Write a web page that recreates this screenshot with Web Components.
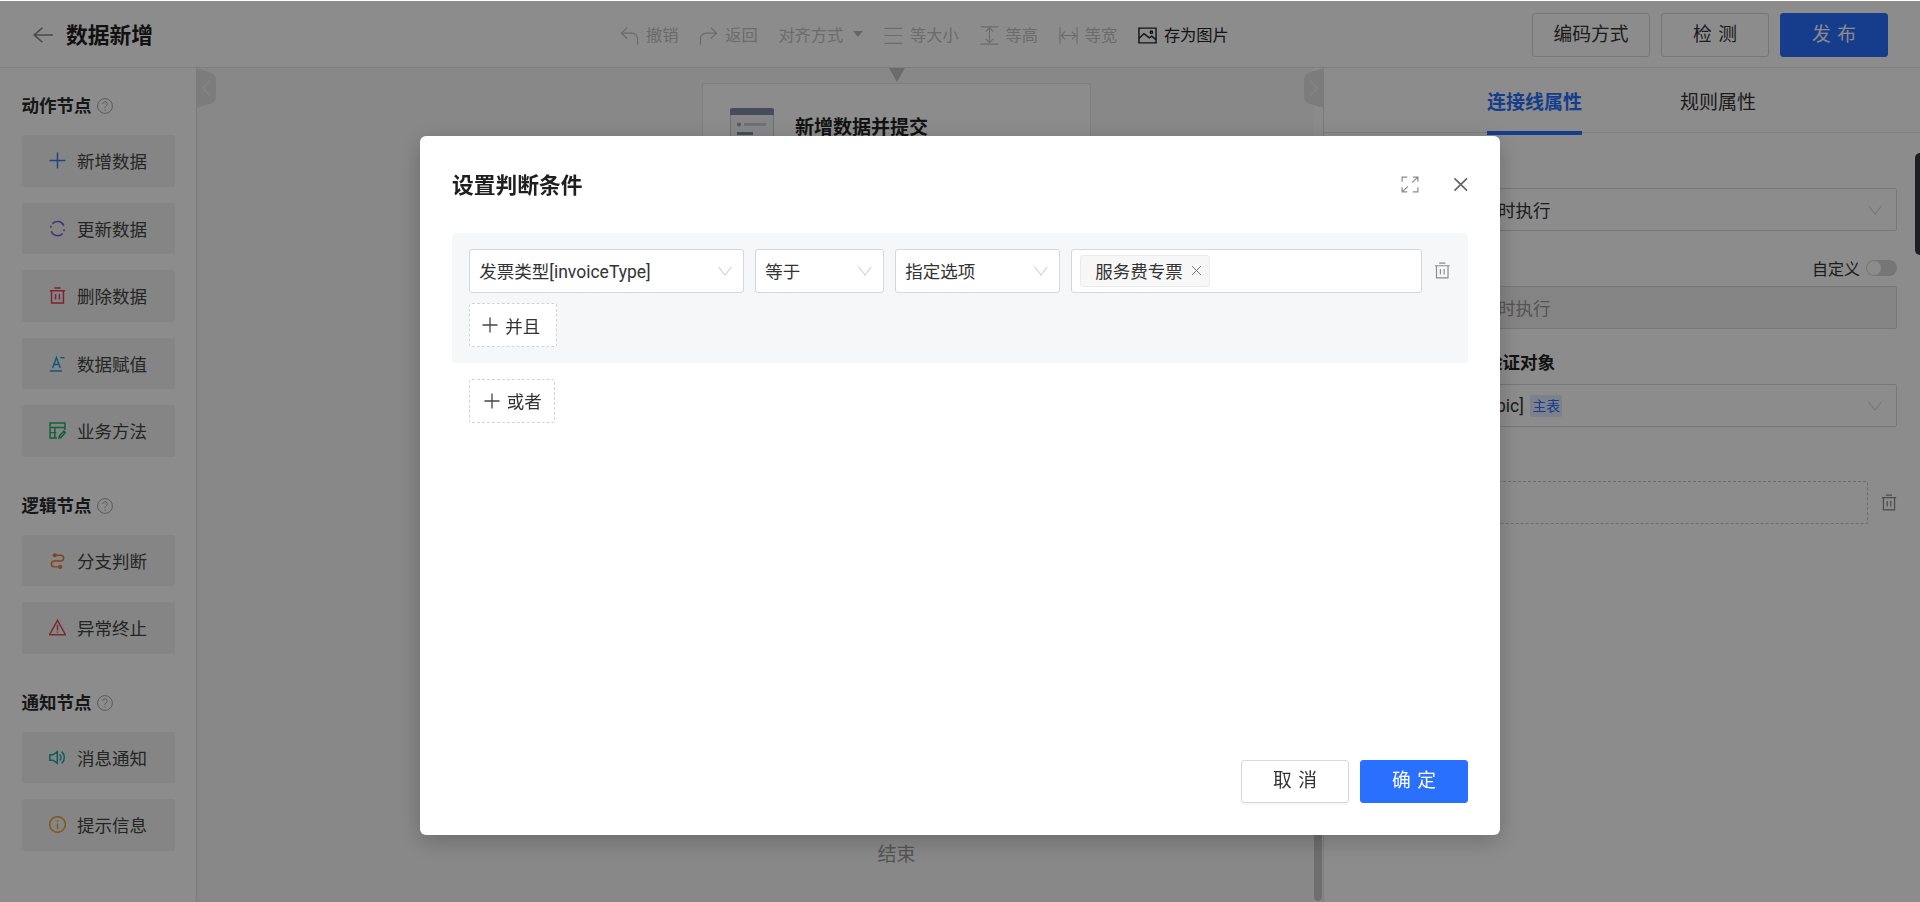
<!DOCTYPE html>
<html lang="zh-CN">
<head>
<meta charset="utf-8">
<title>数据新增</title>
<style>
html,body{margin:0;height:100%;overflow:hidden;background:#fff}
body{font-family:Roboto,"Noto Sans CJK SC","Noto Sans",sans-serif;font-size:17.5px;color:#333}
</style>
</head>
<body>
<x-app>
  <x-header slot="header"></x-header>
  <x-sidebar slot="sidebar"></x-sidebar>
  <x-canvas slot="canvas"></x-canvas>
  <x-panel slot="panel"></x-panel>
</x-app>
<x-dialog title-text="设置判断条件"></x-dialog>

<script>
const ICONS={
 plus:'<path d="M8 .5V15.5M.5 8H15.5"/>',
 refresh:'<path d="M14 5.4A6.6 6.6 0 0 0 3.2 3.4M13 12.6A6.6 6.6 0 0 1 2 10.6"/><path d="M1.8 7.4V5.4M14.2 8.6v2"/>',
 trash:'<path d="M.8 3.5H15.2M5 1H11M2.4 3.5V15H13.6V3.5M6.2 6.5V11.8M9.8 6.5V11.8"/>',
 assign:'<path d="M3.4 12.2L7 2.4L10.6 12.2M4.6 9H9.4M.8 15H12.2M10.8 2.8c1.2-1.4 2 .8 3.7-.5"/>',
 tablepen:'<path d="M7.5 15H1V1H15V7.5M1 5.2H15M1 10H7M5.5 5.2V15M9.5 15.2L10 12.8L14 8.6L15.4 10L11.4 14.4Z"/>',
 branch:'<path d="M3.5 3H11.5A2.8 2.8 0 0 1 11.5 8.5H4.5A2.8 2.8 0 0 0 4.5 14H12.5"/><circle cx="5.5" cy="3" r="1.2"/><circle cx="10.5" cy="14" r="1.2"/>',
 warn:'<path d="M8 1.2L15.5 14.8H.5ZM8 5.5V10.5M8 11.8V13"/>',
 speaker:'<path d="M.8 5.5H3.8L7.8 2.5V13.5L3.8 10.5H.8ZM10 5.2a4 4 0 0 1 0 5.6M12 2.5a7.5 7.5 0 0 1 0 11"/>',
 info:'<circle cx="8" cy="8" r="7.4"/><path d="M8 7V12.2M8 4V5.4"/>',
 help:'<circle cx="8" cy="8" r="7.4"/><path d="M5.8 6a2.2 2.2 0 1 1 3.4 1.9C8.3 8.5 8 9 8 10M8 11.3V12.6"/>',
 chev:'<path d="M.6 3.2L8 12.8L15.4 3.2"/>',
 close:'<path d="M1.5 1.5L14.5 14.5M14.5 1.5L1.5 14.5"/>',
 expand:'<path d="M1 5.5V1H5.5M15 1L10 6M10.5 1H15V5.5M1 15L6 10M1 10.5V15H5.5M15 10.5V15H10.5"/>',
 undo:'<path d="M6 1.5L1.2 6L6 10.5M1.2 6H10c3 0 4.8 2.4 4.8 5V15.5"/>',
 redo:'<path d="M10 1.5L14.8 6L10 10.5M14.8 6H6c-3 0-4.8 2.4-4.8 5V15.5"/>',
 samesize:'<path d="M.5 2H15.5M.5 8H15.5M.5 14.6H15.5"/>',
 sameheight:'<path d="M.5 .8H15.5M.5 15.2H15.5M8 1.5V14M4.8 4.8L8 1.5L11.2 4.8M4.8 10.8L8 14L11.2 10.8"/>',
 samewidth:'<path d="M.8 1V15M15.2 1V15M2 8H14M5 4.8L2 8L5 11.2M11 4.8L14 8L11 11.2"/>',
 image:'<path d="M.8 1.8H15.2V14.2H.8ZM.8 10.5L5 6.5L9.5 10L11.5 8.5L15.2 11.5"/><circle cx="11.3" cy="5.2" r="1"/>',
 back:'<path d="M16 8H1M7.5 1.5L1 8L7.5 14.5"/>'
};
const define=(name,render)=>customElements.define(name,class extends HTMLElement{
  connectedCallback(){ if(this.shadowRoot) return; this.attachShadow({mode:'open'}).innerHTML=render(this); }
});

define('x-icon',el=>{
  const w=el.getAttribute('w')||16,h=el.getAttribute('h')||w,c=el.getAttribute('color')||'currentColor',s=el.getAttribute('sw')||1.1;
  return `<style>:host{display:inline-flex;flex:none;width:${w}px;height:${h}px;color:${c}}svg{display:block;width:100%;height:100%}</style>
  <svg viewBox="0 0 16 16" preserveAspectRatio="none" fill="none" stroke="currentColor" stroke-width="${s}">${ICONS[el.getAttribute('name')]}</svg>`;
});

define('x-tool',el=>{
  const off=el.hasAttribute('off');
  return `<style>:host{display:inline-flex;align-items:center;gap:7px;font-size:16.25px;line-height:24px;padding-top:1px;color:${off?'#c4c4c4':'#222'};white-space:nowrap}
  .t{width:0;height:0;border-left:5px solid transparent;border-right:5px solid transparent;border-top:6px solid #bbb;margin:0 0 3px 3px}</style>
  ${el.getAttribute('icon')?`<x-icon name="${el.getAttribute('icon')}" w="19" h="19" sw="${off?1:1.2}"></x-icon>`:''}<slot></slot>${el.hasAttribute('drop')?'<i class="t"></i>':''}`;
});

define('x-btn',el=>{
  const p=el.hasAttribute('primary');
  return `<style>:host{display:inline-flex;align-items:center;justify-content:center;box-sizing:border-box;height:${el.getAttribute('h')||43.75}px;width:${el.getAttribute('w')||108}px;border-radius:3px;
  font-size:18.75px;line-height:1;white-space:nowrap;border:1px solid ${p?'#2970ff':'#d9d9d9'};background:${p?'#2970ff':'#fff'};color:${p?'#fff':'#333'};${el.hasAttribute('shadow')?'box-shadow:0 2px 2px rgba(0,0,0,.04);':''}}
  span{letter-spacing:${el.hasAttribute('spaced')?'.34em':'0'};margin-right:${el.hasAttribute('spaced')?'-.34em':'0'}}</style><span><slot></slot></span>`;
});

define('x-header',()=>`<style>
 :host{display:flex;align-items:center;box-sizing:border-box;height:68px;border-top:1px solid #fff;border-bottom:1px solid #e6e6e6;padding-top:2px;background:#fff}
 .left{display:flex;align-items:center;width:620px;box-sizing:border-box;padding-left:33px;gap:13px;flex:none}
 h1{margin:2px 0 0;font-size:21.75px;font-weight:700;line-height:30px;color:#1f1f1f}
 .tools{display:flex;align-items:center;gap:20.7px}
 .right{margin-left:auto;display:flex;gap:11px;padding-right:32px}
</style>
<div class="left"><x-icon name="back" w="20" h="18" color="#888" sw="1.4"></x-icon><h1>数据新增</h1></div>
<div class="tools">
 <x-tool off icon="undo">撤销</x-tool><x-tool off icon="redo">返回</x-tool><x-tool off drop>对齐方式</x-tool>
 <x-tool off icon="samesize">等大小</x-tool><x-tool off icon="sameheight">等高</x-tool><x-tool off icon="samewidth">等宽</x-tool>
 <x-tool icon="image">存为图片</x-tool>
</div>
<div class="right"><x-btn w="118">编码方式</x-btn><x-btn spaced>检测</x-btn><x-btn spaced primary>发布</x-btn></div>`);

define('x-node-btn',el=>`<style>
 :host{display:flex;align-items:center;box-sizing:border-box;width:153px;height:51.25px;padding-left:27px;gap:11.5px;background:#f2f2f2;border-radius:2px;font-size:17.5px;color:#444}
</style><x-icon name="${el.getAttribute('icon')}" w="17" h="17" color="${el.getAttribute('color')}" sw="1.4"></x-icon><slot></slot>`);

define('x-node-group',el=>`<style>
 :host{display:flex;flex-direction:column;gap:16.25px;margin-bottom:37px}
 .t{display:flex;align-items:center;gap:5px;height:24px;margin-bottom:1px;font-size:17.5px;font-weight:700;color:#2a2a2a;line-height:24px}
</style><div class="t">${el.getAttribute('label')}<x-icon name="help" w="16" h="16" color="#999" sw=".9"></x-icon></div><slot></slot>`);

define('x-sidebar',()=>`<style>
 :host{display:block;box-sizing:border-box;width:197px;height:100%;padding:26px 0 0 21.5px;background:#fff;border-right:1px solid #e0e0e0}
</style>
<x-node-group label="动作节点">
 <x-node-btn icon="plus" color="#3d78ea">新增数据</x-node-btn>
 <x-node-btn icon="refresh" color="#7a5cd8">更新数据</x-node-btn>
 <x-node-btn icon="trash" color="#e2434f">删除数据</x-node-btn>
 <x-node-btn icon="assign" color="#1f9ed8">数据赋值</x-node-btn>
 <x-node-btn icon="tablepen" color="#1fb26b">业务方法</x-node-btn>
</x-node-group>
<x-node-group label="逻辑节点">
 <x-node-btn icon="branch" color="#ea7a30">分支判断</x-node-btn>
 <x-node-btn icon="warn" color="#e44b57">异常终止</x-node-btn>
</x-node-group>
<x-node-group label="通知节点">
 <x-node-btn icon="speaker" color="#16a7a7">消息通知</x-node-btn>
 <x-node-btn icon="info" color="#e9a23a">提示信息</x-node-btn>
</x-node-group>`);

define('x-flow-node',()=>`<style>
 :host{position:absolute;left:505px;top:15px;box-sizing:border-box;width:389px;height:104px;background:#fff;border:1px solid #e6e6e6;border-radius:2px;display:flex;align-items:flex-start;padding:24px 0 0 27px;gap:21px}
 b{font-size:19px;font-weight:700;line-height:26px;color:#222;margin-top:7px}
 svg{display:block;flex:none}
</style>
<svg width="44" height="44" viewBox="0 0 44 44"><rect x="0.5" y="0.5" width="43" height="43" rx="2" fill="#f4f5f7" stroke="#c9ccd4"/><path d="M0 2a2 2 0 0 1 2-2H42a2 2 0 0 1 2 2V7H0Z" fill="#838ba0"/><circle cx="9" cy="16.5" r="2" fill="#9aa1b1"/><rect x="14" y="15" width="22" height="3" fill="#c9ccd4"/><rect x="7" y="24" width="16" height="3" fill="#838ba0"/><rect x="32" y="30" width="3" height="10" fill="#1cc576"/></svg>
<b>新增数据并提交</b>`);

define('x-canvas',()=>`<style>
 :host{display:block;position:relative;height:100%;background:#f7f7f7;overflow:hidden}
 .tab{position:absolute;top:0;width:19px;height:40px;display:block}
 .l{left:0}.r{right:0}
 .arrow{position:absolute;left:692px;top:0;width:0;height:0;border-left:8px solid transparent;border-right:8px solid transparent;border-top:14px solid #c4c4c4}
 .track{position:absolute;right:0;top:0;bottom:0;width:9px;background:#fdfdfd}
 .thumb{position:absolute;right:1px;top:300px;bottom:1px;width:8px;border-radius:4px;background:#c8c8c8}
 .end{position:absolute;left:667.5px;top:774px;width:64px;text-align:center;font-size:19px;line-height:26px;color:#999}
 .ring{position:absolute;left:676px;top:721px;width:46px;height:46px;border:1px solid #888;border-radius:50%;box-sizing:border-box}
</style>
<div class="track"><div class="thumb"></div></div>
<svg class="tab l" viewBox="0 0 19 40"><path d="M0 0L12 4Q19 6 19 12V29Q19 35 12 36L0 40Z" fill="#e2e2e2"/><path d="M12 13L6 20L12 27" fill="none" stroke="#f2f2f2" stroke-width="1.2"/></svg>
<svg class="tab r" viewBox="0 0 19 40"><path d="M19 0L7 4Q0 6 0 12V29Q0 35 7 36L19 40Z" fill="#e2e2e2"/><path d="M7 13L13 20L7 27" fill="none" stroke="#f2f2f2" stroke-width="1.2"/></svg>
<div class="arrow"></div>
<x-flow-node></x-flow-node>
<div class="ring"></div>
<div class="end">结束</div>`);

define('x-field',el=>`<style>
 :host{display:flex;align-items:center;box-sizing:border-box;height:${el.getAttribute('h')||43}px;width:100%;border:1px solid #d9d9d9;border-radius:2px;background:${el.hasAttribute('disabled')?'#f1f1f1':'transparent'};color:${el.hasAttribute('disabled')?'#999':'#333'};font-size:17.5px;padding:0 14.5px 0 ${el.getAttribute('pl')||10}px;white-space:nowrap;gap:6px}
 .sp{flex:1}
</style><slot></slot><span class="sp"></span>${el.hasAttribute('chev')?'<x-icon name="chev" w="14" h="14" color="#c4c4c4" sw="1"></x-icon>':''}`);

define('x-panel',()=>`<style>
 :host{display:block;box-sizing:border-box;height:100%;border-left:1px solid #e0e0e0;background:#fff}
 .tabs{display:flex;gap:98px;height:65px;padding-left:163px;border-bottom:1px solid #e6e6e6;box-sizing:border-box}
 .tab{font-size:19px;line-height:24px;padding-top:23px;color:#333;box-sizing:border-box;height:67px;white-space:nowrap}
 .on{color:#2970ff;font-weight:700;border-bottom:4px solid #2970ff}
 .body{display:flex;flex-direction:column;padding:55px 23px 0 22px}
 .row{display:flex;align-items:center;justify-content:flex-end;gap:6px;height:24px;margin:25px 0 6px;font-size:16px;color:#333}
 .sw{position:relative;width:31px;height:16px;border-radius:8px;background:#d8d8d8}
 .sw::after{content:"";position:absolute;left:1px;top:1px;width:14px;height:14px;border-radius:50%;background:#fff}
 .lbl{margin:21.5px 0 9.5px;font-size:17.5px;font-weight:700;line-height:24px;color:#222;padding-left:139px;white-space:nowrap}
 .tag{font-size:13.75px;line-height:22px;height:22px;padding:0 2.5px;background:#e3ecff;color:#2970ff;border-radius:2px}
 .dash{display:flex;align-items:center;margin-top:54px;gap:13px}
 .box{flex:1;height:43px;box-sizing:border-box;border:1px dashed #c8c8c8;border-radius:2px}
</style>
<div class="tabs"><div class="tab on">连接线属性</div><div class="tab">规则属性</div></div>
<div class="body">
 <x-field chev pl="151">时执行</x-field>
 <div class="row">自定义<div class="sw"></div></div>
 <x-field disabled pl="151">时执行</x-field>
 <div class="lbl">验证对象</div>
 <x-field chev pl="149">pic]<span class="tag">主表</span></x-field>
 <div class="dash"><div class="box"></div><x-icon name="trash" w="16" h="17" color="#8a8a8a" sw="1.2"></x-icon></div>
</div>`);

define('x-select',el=>`<style>
 :host{display:flex;align-items:center;box-sizing:border-box;flex:none;height:43.75px;width:${el.getAttribute('w')}px;background:#fff;border:1px solid #d5d7dc;border-radius:3px;padding:0 ${el.hasAttribute('plain')?0:11}px 0 ${el.hasAttribute('plain')?8:9}px;font-size:17.5px;color:#333;white-space:nowrap}
 .s{flex:1}
</style><slot></slot><span class="s"></span>${el.hasAttribute('plain')?'':'<x-icon name="chev" w="14" h="14" color="#bdbdbd" sw="1"></x-icon>'}`);

define('x-tag',()=>`<style>
 :host{display:inline-flex;align-items:center;box-sizing:border-box;height:32.5px;width:130px;padding-left:14px;gap:8px;background:#f7f7f7;border:1px solid #ebebeb;border-radius:3px;font-size:17.5px;color:#333}
</style><slot></slot><x-icon name="close" w="11" h="11" color="#666" sw="1.3"></x-icon>`);

define('x-add',el=>`<style>
 :host{display:inline-flex;align-items:center;box-sizing:border-box;height:43.75px;width:${el.getAttribute('w')}px;padding-left:${el.getAttribute('pl')}px;gap:7px;border:1px dashed #d4d4d4;border-radius:3px;font-size:17.5px;color:#333;background:#fff;white-space:nowrap}
</style><x-icon name="plus" w="16" h="16" color="#444" sw="1.3"></x-icon><slot></slot>`);

define('x-condition',()=>`<style>
 :host{display:block;box-sizing:border-box;width:1015.5px;height:130px;padding:16px 0 0 17.3px;background:#f6f7f9;border-radius:3px}
 .row{display:flex;align-items:center;gap:11.5px}
 .add{margin-top:10.5px;display:flex}
 x-icon{margin-left:.5px}
</style>
<div class="row">
 <x-select w="274.5">发票类型[invoiceType]</x-select>
 <x-select w="128.5">等于</x-select>
 <x-select w="164.5">指定选项</x-select>
 <x-select plain w="350.5"><x-tag>服务费专票</x-tag></x-select>
 <x-icon name="trash" w="16.5" h="17" color="#8a8a8a" sw="1.1"></x-icon>
</div>
<div class="add"><x-add w="87.5" pl="12">并且</x-add></div>`);

define('x-dialog',el=>`<style>
 :host{position:fixed;left:0;right:0;top:1px;bottom:0;background:rgba(0,0,0,.45);display:flex;justify-content:center;align-items:flex-start}
 .m{box-sizing:border-box;width:1080px;height:699px;margin-top:135px;background:#fff;border-radius:6px;box-shadow:0 6px 24px rgba(0,0,0,.22);padding:0 32px 0 32px;display:flex;flex-direction:column}
 .h{display:flex;align-items:center;height:97px;flex:none}
 h2{margin:2px 0 0;font-size:21.75px;font-weight:700;line-height:30px;color:#1f1f1f;flex:1}
 .h x-icon{display:block}
 .or{display:flex;margin:16px 0 0 17.3px}
 .f{margin-top:auto;margin-bottom:32.5px;display:flex;justify-content:flex-end;gap:11px}
 .edge{position:absolute;right:0;top:152px;width:5px;height:102px;background:#1e1e22;border-radius:6px 0 0 6px}
</style>
<div class="m">
 <div class="h"><h2>${el.getAttribute('title-text')}</h2>
  <x-icon name="expand" w="18" h="17" color="#8c8c8c" sw="1.1" style="margin-right:33.5px"></x-icon>
  <x-icon name="close" w="15.5" h="15" color="#666" sw="1.7"></x-icon>
 </div>
 <x-condition></x-condition>
 <div class="or"><x-add w="85.5" pl="13.5">或者</x-add></div>
 <div class="f"><x-btn spaced w="108" h="43" shadow>取消</x-btn><x-btn spaced primary w="108" h="43">确定</x-btn></div>
</div>
<div class="edge"></div>`);

define('x-app',()=>`<style>
 :host{display:grid;width:1920px;height:902px;grid-template-columns:197px 1fr 597px;grid-template-rows:68px 834px;overflow:hidden}
 .h{grid-column:1/4;display:block}
</style>
<slot name="header" class="h"></slot><slot name="sidebar"></slot><slot name="canvas"></slot><slot name="panel"></slot>`);
</script>
</body>
</html>
